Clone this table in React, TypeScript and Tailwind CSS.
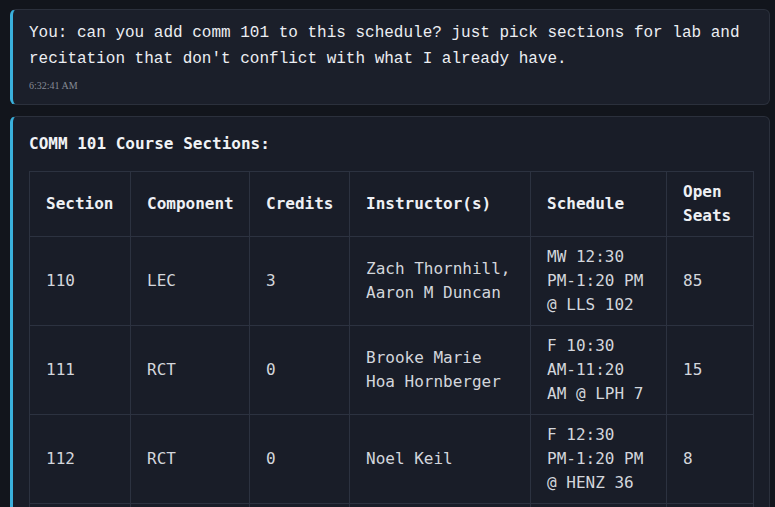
import React from "react";

const rows = [
  { s: "110", c: "LEC", cr: "3", i: "Zach Thornhill, Aaron M Duncan", sch: "MW 12:30 PM-1:20 PM @ LLS 102", o: "85" },
  { s: "111", c: "RCT", cr: "0", i: "Brooke Marie Hoa Hornberger", sch: "F 10:30 AM-11:20 AM @ LPH 7", o: "15" },
  { s: "112", c: "RCT", cr: "0", i: "Noel Keil", sch: "F 12:30 PM-1:20 PM @ HENZ 36", o: "8" },
  { s: "113", c: "RCT", cr: "0", i: "Noel Keil", sch: "F 1:30 PM-2:20 PM @ HENZ 36", o: "12" },
];

export default function App() {
  const th = "border border-[#2c3240] px-4 py-2 text-left align-middle font-bold text-[#eef0f4]";
  const td = "border border-[#2c3240] px-4 py-2 text-left align-middle text-[#d3d6dc]";
  return (
    <div className="min-h-[507px] w-[775px] bg-[#12151c] pt-[9px] pl-[10px] pr-[5px] overflow-hidden">
      <div className="rounded-md border border-[#2b303c] border-l-[3px] border-l-[#3ab0dc] bg-[#1b1f2a] pl-4 pr-4 pt-[10px] pb-[11px]">
        <div className="text-[16px] leading-[26px] text-[#eceef2]" style={{ fontFamily: '"Liberation Mono", monospace' }}>
          You: can you add comm 101 to this schedule? just pick sections for lab and recitation that don't conflict with what I already have.
        </div>
        <div className="mt-[6px] text-[10px] leading-[15px] text-[#868b95]" style={{ fontFamily: '"Liberation Serif", serif' }}>
          6:32:41 AM
        </div>
      </div>
      <div
        className="mt-[11px] rounded-md border border-[#2b303c] border-l-[3px] border-l-[#3ab0dc] bg-[#191d28] pl-4 pr-4 pt-[15px] pb-4"
        style={{ fontFamily: '"DejaVu Sans Mono", monospace' }}
      >
        <div className="mb-[15px] text-[16px] leading-6 font-bold text-[#f1f3f6]">COMM 101 Course Sections:</div>
        <table className="w-[724px] table-fixed border-collapse text-[16px] leading-6">
          <colgroup>
            <col className="w-[101px]" />
            <col className="w-[119px]" />
            <col className="w-[100px]" />
            <col className="w-[181px]" />
            <col className="w-[136px]" />
            <col className="w-[87px]" />
          </colgroup>
          <thead>
            <tr>
              <th className={th}>Section</th>
              <th className={th}>Component</th>
              <th className={th}>Credits</th>
              <th className={th}>Instructor(s)</th>
              <th className={th}>Schedule</th>
              <th className={th}>Open Seats</th>
            </tr>
          </thead>
          <tbody>
            {rows.map((r) => (
              <tr key={r.s}>
                <td className={td}>{r.s}</td>
                <td className={td}>{r.c}</td>
                <td className={td}>{r.cr}</td>
                <td className={td}>{r.i}</td>
                <td className={td}>{r.sch}</td>
                <td className={td}>{r.o}</td>
              </tr>
            ))}
          </tbody>
        </table>
      </div>
    </div>
  );
}
